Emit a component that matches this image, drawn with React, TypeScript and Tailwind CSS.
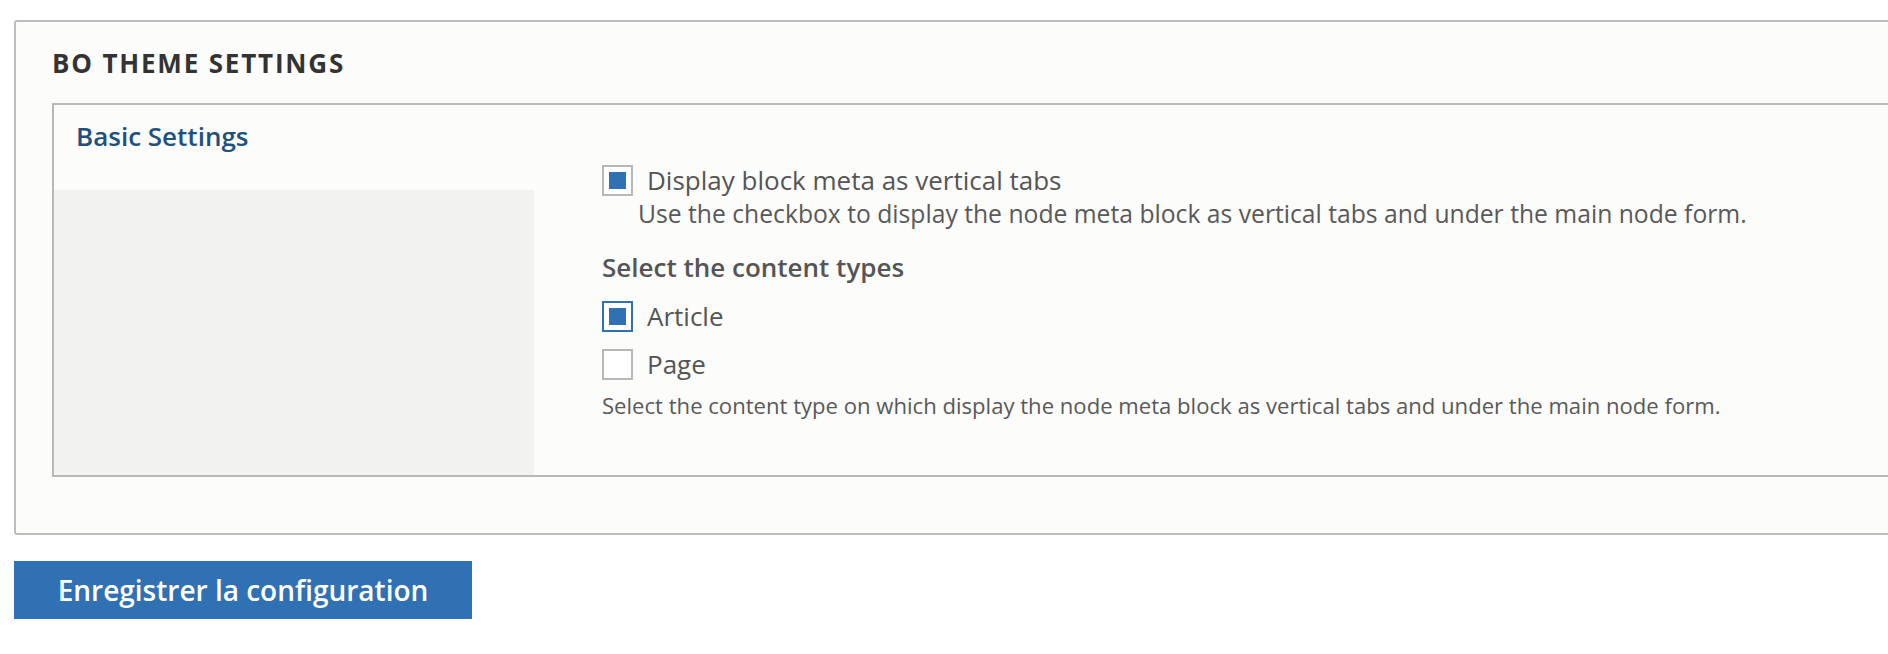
import React from "react";

function Checkbox({ checked, focused }: { checked?: boolean; focused?: boolean }) {
  return (
    <span
      className={`flex h-[31px] w-[31px] shrink-0 items-center justify-center border-2 bg-white ${
        focused ? "border-[#3071b3]" : "border-[#b8b8b8]"
      }`}
    >
      {checked && <span className="h-[17px] w-[17px] bg-[#3071b3]" />}
    </span>
  );
}

export default function App() {
  return (
    <div className="min-h-screen w-full overflow-hidden bg-white font-['Open_Sans',sans-serif] text-[#555]">
      <div className="pt-[20px] pl-[14px]">
        <fieldset className="w-[1900px] rounded-[3px] border-2 border-[#bdbdbd] bg-[#fcfcfa] pt-[25px] pl-[36px] pb-[56px]">
          <h2 className="text-[26px] leading-[32px] font-bold uppercase tracking-[0.07em] text-[#333]">
            BO Theme Settings
          </h2>

          <div className="mt-[24px] flex border-2 border-[#b8b8b8]">
            {/* vertical tabs menu */}
            <div className="flex w-[480px] shrink-0 flex-col">
              <div className="h-[85px] bg-[#fcfcfa] pt-[15px] pl-[22px]">
                <span className="text-[26px] leading-[32px] font-semibold text-[#1e5080]">
                  Basic Settings
                </span>
              </div>
              <div className="flex-1 bg-[#f2f2f0]" />
            </div>

            {/* tab pane */}
            <div className="flex-1 pt-[59px] pl-[68px] pb-[56px]">
              <label className="flex h-[32px] items-center gap-[14px]">
                <Checkbox checked />
                <span className="text-[26px] leading-[32px]">Display block meta as vertical tabs</span>
              </label>
              <p className="mt-[2px] pl-[36px] text-[24.7px] leading-[32px] text-[#595959]">
                Use the checkbox to display the node meta block as vertical tabs and under the main node form.
              </p>

              <h3 className="mt-[21px] text-[26px] leading-[32px] font-semibold text-[#555]">
                Select the content types
              </h3>
              <div className="mt-[17px] flex flex-col gap-[16px]">
                <label className="flex h-[32px] items-center gap-[14px]">
                  <Checkbox checked focused />
                  <span className="text-[26px] leading-[32px]">Article</span>
                </label>
                <label className="flex h-[32px] items-center gap-[14px]">
                  <Checkbox />
                  <span className="text-[26px] leading-[32px]">Page</span>
                </label>
              </div>
              <p className="mt-[11px] text-[22.1px] leading-[28px] text-[#595959]">
                Select the content type on which display the node meta block as vertical tabs and under the main node form.
              </p>
            </div>
          </div>
        </fieldset>

        <button className="mt-[26px] flex h-[58px] w-[458px] items-center justify-center bg-[#3071b3] text-[28px] font-semibold text-white">
          Enregistrer la configuration
        </button>
      </div>
    </div>
  );
}
